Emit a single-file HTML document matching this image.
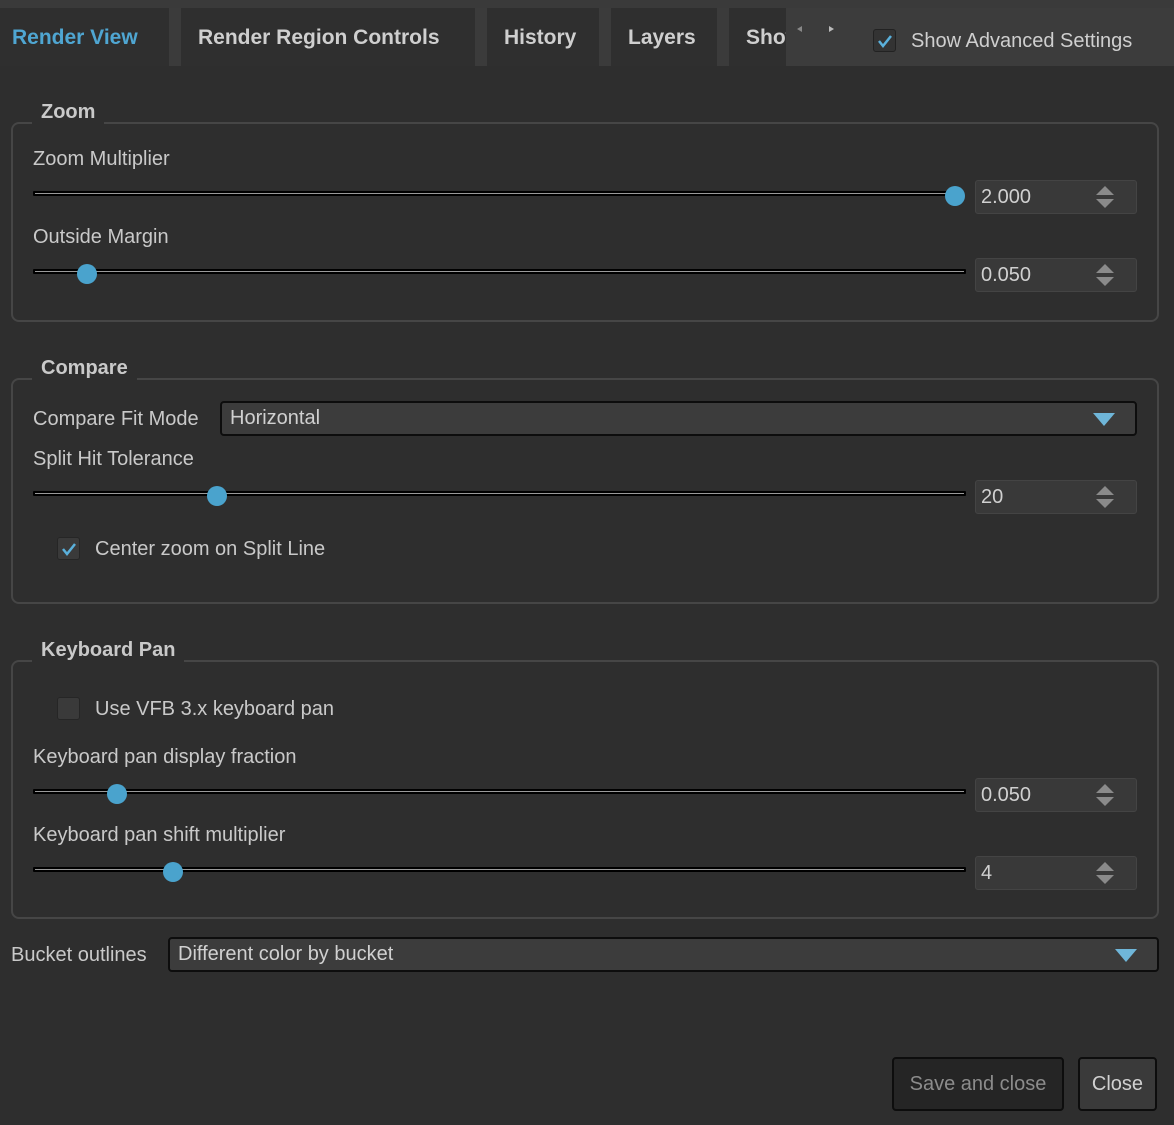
<!DOCTYPE html>
<html><head><meta charset="utf-8"><style>
*{box-sizing:border-box;margin:0;padding:0}
body{width:1174px;height:1125px;background:#2e2e2e;font-family:"Liberation Sans",sans-serif;color:#c9c9c9;position:relative;overflow:hidden;font-size:20px}
.a{position:absolute}
.tab{position:absolute;top:8px;height:58px;background:#2f2f2f;font-weight:bold;font-size:21px;line-height:60px;color:#cfcfcf}
.sep{position:absolute;top:8px;height:58px;background:#3b3b3b}
.grp{position:absolute;left:11px;width:1148px;border:2px solid #464646;border-radius:8px}
.gt{position:absolute;background:#2e2e2e;font-weight:bold;font-size:20px;padding:0 9px;line-height:24px}
.lbl{position:absolute;line-height:24px;white-space:nowrap}
.trk{position:absolute;left:33px;width:933px;height:5px;background:#000;border-radius:1px}
.trk:after{content:"";position:absolute;left:2px;right:2px;top:2px;height:1px;background:#9a9a9a}
.hdl{position:absolute;width:20px;height:20px;border-radius:50%;background:#4aa3cd}
.spin{position:absolute;left:975px;width:162px;height:34px;background:#393939;border:1px solid #444;border-radius:3px;line-height:32px;padding-left:5px;color:#d0d0d0}
.spin:before{content:"";position:absolute;right:22px;top:5px;border:9px solid transparent;border-top:0;border-bottom:9px solid #8a8a8a}
.spin:after{content:"";position:absolute;right:22px;bottom:5px;border:9px solid transparent;border-bottom:0;border-top:9px solid #8a8a8a}
.dd{position:absolute;height:35px;background:#3c3c3c;border:2px solid #0d0d0d;border-radius:4px;line-height:31px;padding-left:8px;color:#d0d0d0}
.dd:after{content:"";position:absolute;right:20px;top:10px;border:11px solid transparent;border-bottom:0;border-top:13px solid #6fb6d9}
.cb{position:absolute;width:23px;height:23px;background:#3a3a3a;border:1px solid #262626;border-radius:3px}
</style></head><body>
<div class="a" style="left:0;top:0;width:1174px;height:8px;background:#3a3a3a"></div>
<div class="a" style="left:786px;top:8px;width:388px;height:58px;background:#3c3c3c"></div>
<div class="tab" style="left:0;width:169px;padding-left:12px;color:#4fa6d2">Render View</div>
<div class="sep" style="left:169px;width:12px"></div>
<div class="tab" style="left:181px;width:294px;padding-left:17px">Render Region Controls</div>
<div class="sep" style="left:475px;width:12px"></div>
<div class="tab" style="left:487px;width:112px;padding-left:17px">History</div>
<div class="sep" style="left:599px;width:12px"></div>
<div class="tab" style="left:611px;width:106px;padding-left:17px">Layers</div>
<div class="sep" style="left:717px;width:12px"></div>
<div class="tab" style="left:729px;width:57px;padding-left:17px;overflow:hidden;white-space:nowrap">Show</div>
<div class="a" style="left:797px;top:26px;width:0;height:0;border:3px solid transparent;border-left:0;border-right:5px solid #888"></div>
<div class="a" style="left:829px;top:26px;width:0;height:0;border:3px solid transparent;border-right:0;border-left:5px solid #bbb"></div>
<div class="cb" style="left:873px;top:29px;background:#333;border-color:#222"></div>
<svg class="a" style="left:873px;top:29px" width="24" height="24"><path d="M6 12 L10 17 L18 7" stroke="#5ab0db" stroke-width="2.5" fill="none"/></svg>
<div class="lbl" style="left:911px;top:29px;color:#cfcfcf">Show Advanced Settings</div>

<div class="grp" style="top:122px;height:200px"></div>
<div class="gt" style="left:32px;top:100px">Zoom</div>
<div class="lbl" style="left:33px;top:147px">Zoom Multiplier</div>
<div class="trk" style="top:191px;width:925px"></div>
<div class="hdl" style="left:945px;top:186px"></div>
<div class="spin" style="top:180px">2.000</div>
<div class="lbl" style="left:33px;top:225px">Outside Margin</div>
<div class="trk" style="top:269px"></div>
<div class="hdl" style="left:77px;top:264px"></div>
<div class="spin" style="top:258px">0.050</div>

<div class="grp" style="top:378px;height:226px"></div>
<div class="gt" style="left:32px;top:356px">Compare</div>
<div class="lbl" style="left:33px;top:407px">Compare Fit Mode</div>
<div class="dd" style="left:220px;top:401px;width:917px">Horizontal</div>
<div class="lbl" style="left:33px;top:447px">Split Hit Tolerance</div>
<div class="trk" style="top:491px"></div>
<div class="hdl" style="left:207px;top:486px"></div>
<div class="spin" style="top:480px">20</div>
<div class="cb" style="left:57px;top:537px"></div>
<svg class="a" style="left:57px;top:537px" width="24" height="24"><path d="M6 12 L10 17 L18 7" stroke="#5ab0db" stroke-width="2.5" fill="none"/></svg>
<div class="lbl" style="left:95px;top:537px">Center zoom on Split Line</div>

<div class="grp" style="top:660px;height:259px"></div>
<div class="gt" style="left:32px;top:638px">Keyboard Pan</div>
<div class="cb" style="left:57px;top:697px"></div>
<div class="lbl" style="left:95px;top:697px">Use VFB 3.x keyboard pan</div>
<div class="lbl" style="left:33px;top:745px">Keyboard pan display fraction</div>
<div class="trk" style="top:789px"></div>
<div class="hdl" style="left:107px;top:784px"></div>
<div class="spin" style="top:778px">0.050</div>
<div class="lbl" style="left:33px;top:823px">Keyboard pan shift multiplier</div>
<div class="trk" style="top:867px"></div>
<div class="hdl" style="left:163px;top:862px"></div>
<div class="spin" style="top:856px">4</div>

<div class="lbl" style="left:11px;top:943px">Bucket outlines</div>
<div class="dd" style="left:168px;top:937px;width:991px">Different color by bucket</div>

<div class="a" style="left:892px;top:1057px;width:172px;height:54px;background:#252525;border:2px solid #0d0d0d;border-radius:4px;text-align:center;line-height:50px;color:#8c8c8c">Save and close</div>
<div class="a" style="left:1078px;top:1057px;width:79px;height:54px;background:#3a3a3a;border:2px solid #0d0d0d;border-radius:4px;text-align:center;line-height:50px;color:#d0d0d0">Close</div>
</body></html>
